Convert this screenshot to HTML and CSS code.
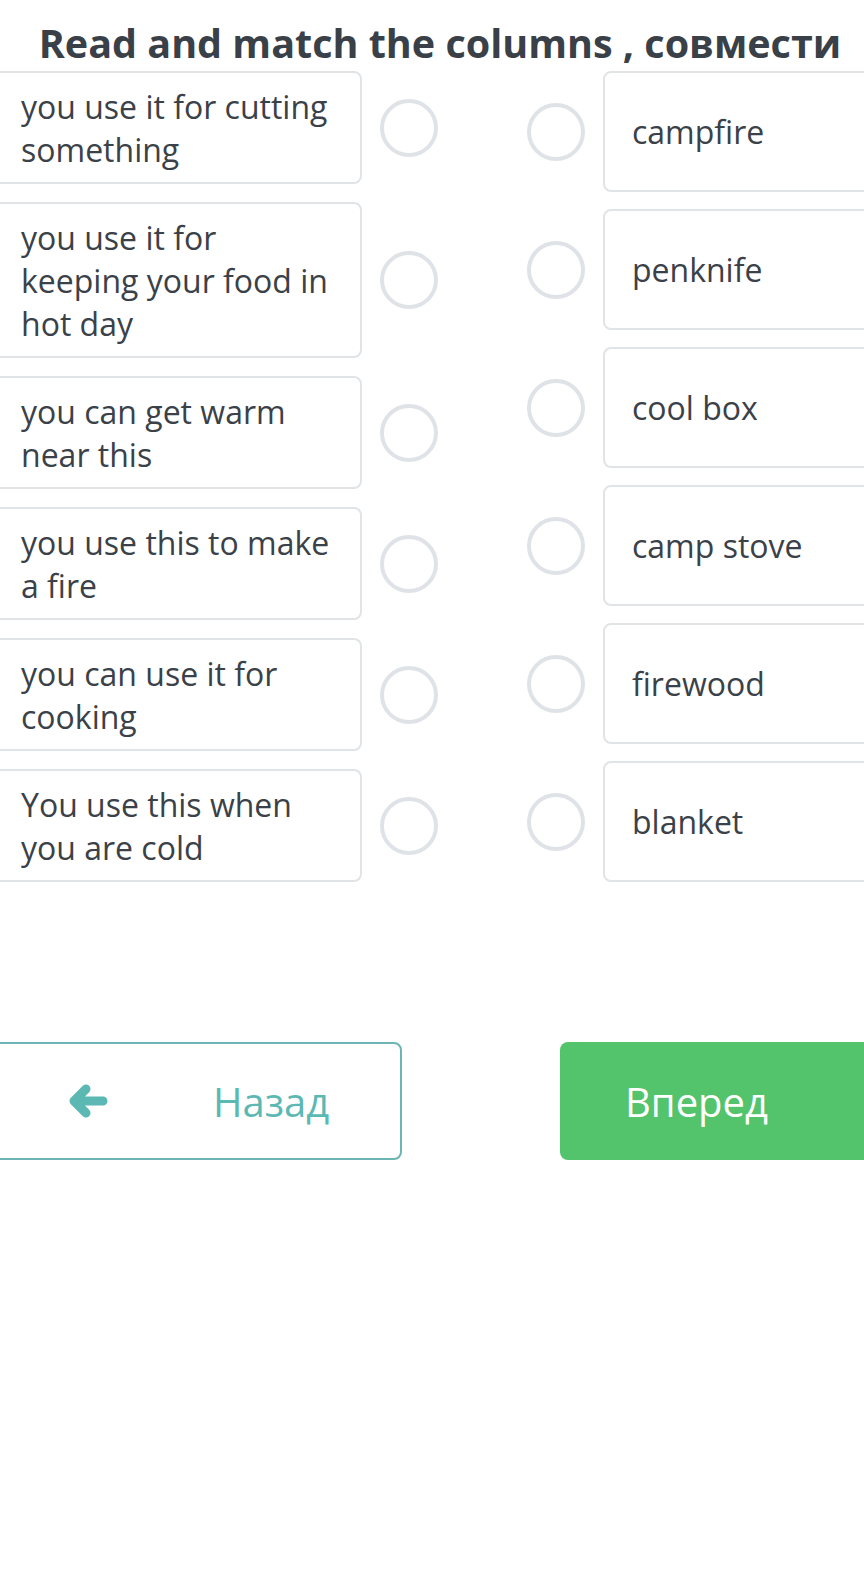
FILE: index.html
```html
<!DOCTYPE html>
<html>
<head>
    <meta charset="UTF-8">
    <title>Read and match</title>
    <link rel="stylesheet" href="styles.css">
</head>
<body>
    <div class="page">
        <h1 class="title">Read and match the columns , совмести</h1>

        <div class="match">
            <div class="col col-left">
                <div class="row"><div class="card">you use it for cutting something</div><span class="dot"></span></div>
                <div class="row"><div class="card">you use it for keeping your food in hot day</div><span class="dot"></span></div>
                <div class="row"><div class="card">you can get warm near this</div><span class="dot"></span></div>
                <div class="row"><div class="card">you use this to make a fire</div><span class="dot"></span></div>
                <div class="row"><div class="card">you can use it for cooking</div><span class="dot"></span></div>
                <div class="row"><div class="card">You use this when you are cold</div><span class="dot"></span></div>
            </div>
            <div class="col col-right">
                <div class="row"><span class="dot"></span><div class="card">campfire</div></div>
                <div class="row"><span class="dot"></span><div class="card">penknife</div></div>
                <div class="row"><span class="dot"></span><div class="card">cool box</div></div>
                <div class="row"><span class="dot"></span><div class="card">camp stove</div></div>
                <div class="row"><span class="dot"></span><div class="card">firewood</div></div>
                <div class="row"><span class="dot"></span><div class="card">blanket</div></div>
            </div>
        </div>

        <div class="nav">
            <button type="button" class="btn btn-back">
                <svg class="arrow" width="40" height="34" viewBox="0 0 40 34">
                    <path d="M18 5 L6 17 L18 29 M8 17 H35" fill="none" stroke="currentColor" stroke-width="9" stroke-linecap="round" stroke-linejoin="round"/>
                </svg>
                <span>Назад</span>
            </button>
            <button type="button" class="btn btn-next">Вперед</button>
        </div>
    </div>
</body>
</html>
```

FILE: styles.css
```css
html, body {
    margin: 0;
    overflow-x: hidden;
    background: #fff;
}
body {
    font-family: "Open Sans", "Noto Sans", sans-serif;
    color: #3b4148;
}
.page {
    width: 914px;
    margin-left: -17px;
}
.title {
    margin: 21px 0 6px;
    font-size: 39.5px;
    line-height: 44px;
    font-weight: 700;
    text-align: center;
    white-space: nowrap;
    color: #3a4048;
}
.match {
    display: flex;
    gap: 89px;
}
.col {
    display: flex;
    flex-direction: column;
}
.col-left {
    gap: 18px;
}
.col-right {
    gap: 17px;
}
.row {
    display: flex;
    align-items: center;
    gap: 18px;
}
.card {
    box-sizing: border-box;
    border: 2px solid #e1e4e7;
    border-radius: 8px;
    font-size: 32px;
    line-height: 43px;
}
.col-left .card {
    width: 379px;
    padding: 12px 28px 11px 36px;
}
.col-right .card {
    width: 295px;
    height: 121px;
    padding: 0 27px;
    display: flex;
    align-items: center;
}
.dot {
    box-sizing: border-box;
    flex-shrink: 0;
    width: 58px;
    height: 58px;
    border: 4px solid #dfe3e7;
    border-radius: 50%;
}
.nav {
    display: flex;
    gap: 158px;
    margin-top: 160px;
}
.btn {
    box-sizing: border-box;
    height: 118px;
    border-radius: 8px;
    font-family: "Open Sans", "Noto Sans", sans-serif;
    font-size: 40px;
    display: flex;
    align-items: center;
    cursor: pointer;
}
.btn-back {
    width: 419px;
    padding: 0 0 0 83px;
    gap: 105px;
    background: #fff;
    border: 2px solid #6db5b5;
    color: #5bb8b3;
}
.btn-back .arrow {
    color: #5bb8b3;
}
.btn-next {
    width: 337px;
    padding: 0 0 0 65px;
    background: #53c36c;
    border: none;
    color: #fff;
}
```
